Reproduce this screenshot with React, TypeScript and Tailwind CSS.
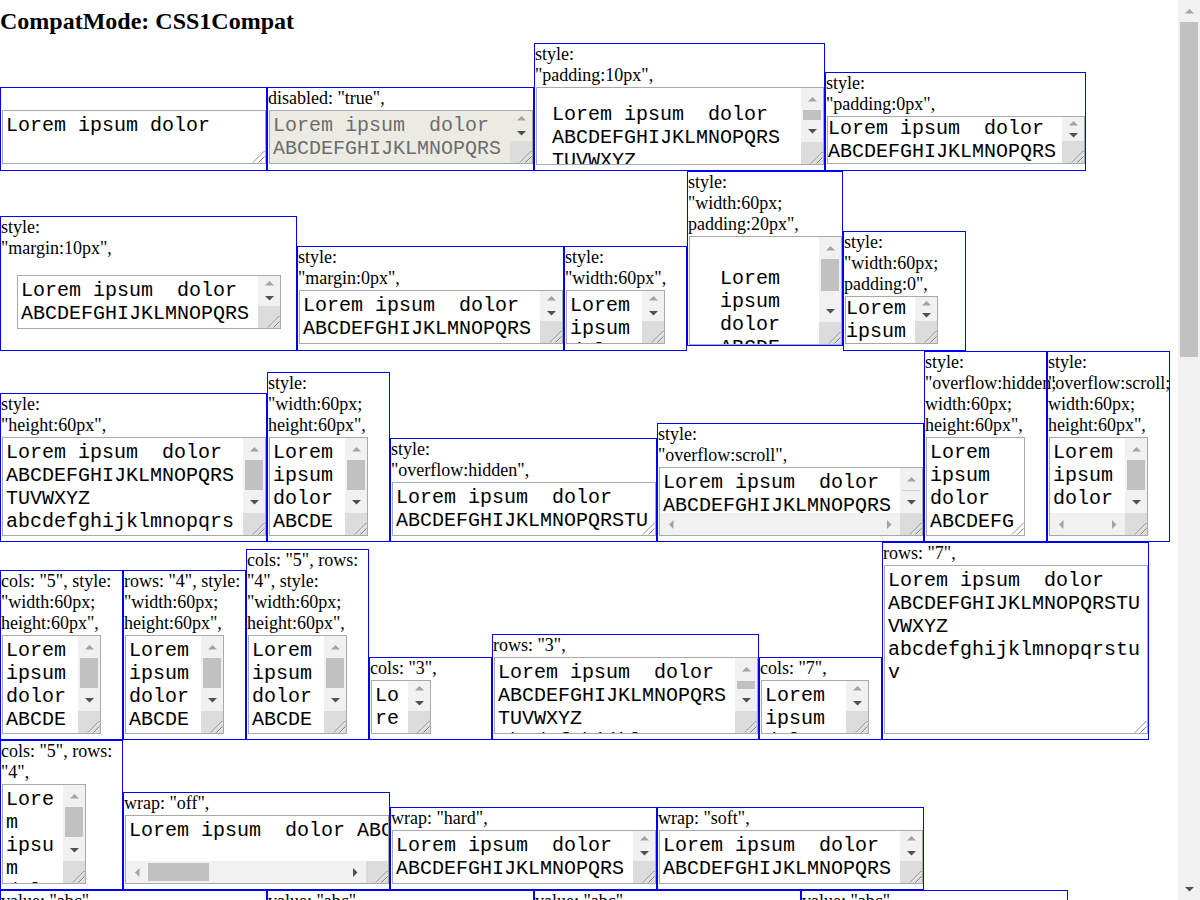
import React from "react";

type VBar = { thumb?: [number, number]; upDark?: boolean; downDark?: boolean; mid?: boolean };
type HBar = { thumb?: [number, number]; leftDark?: boolean; rightDark?: boolean };
type TA = {
  w: number;
  h: number;
  pad?: number;
  lines: string[];
  v?: VBar;
  hb?: HBar;
  disabled?: boolean;
  m?: number;
};
type Box = { w: number; label: string[]; ta: TA; flush?: boolean; tall?: boolean };

const L1 = "Lorem ipsum  dolor";
const L2 = "ABCDEFGHIJKLMNOPQRS";
const L3 = "TUVWXYZ";
const L4 = "abcdefghijklmnopqrs";
const NARROW = ["Lorem", "ipsum", "dolor", "ABCDE", "FGHIJ"];
const W60 = ['"width:60px;', 'height:60px",'];

const rows: Box[][] = [
  [
    { w: 267, tall: true, label: [""], ta: { w: 264, h: 54, lines: ["Lorem ipsum dolor"] } },
    { w: 267, tall: true, label: ['disabled: "true",'], ta: { w: 264, h: 54, disabled: true, lines: [L1, L2, L3], v: { downDark: true } } },
    { w: 291, label: ["style:", '"padding:10px",'], ta: { w: 288, h: 78, pad: 15, lines: [L1, L2, L3, L4], v: { thumb: [0, 10], downDark: true } } },
    { w: 261, tall: true, label: ["style:", '"padding:0px",'], ta: { w: 258, h: 48, pad: 0, lines: [L1, L2, L3], v: { downDark: true } } },
  ],
  [
    { w: 297, tall: true, label: ["style:", '"margin:10px",'], ta: { w: 264, h: 54, m: 15, lines: [L1, L2, L3], v: { downDark: true } } },
    { w: 267, tall: true, label: ["style:", '"margin:0px",'], ta: { w: 264, h: 54, lines: [L1, L2, L3], v: { downDark: true } } },
    { w: 123, tall: true, label: ["style:", '"width:60px",'], ta: { w: 99, h: 54, lines: NARROW, v: { downDark: true } } },
    { w: 156, flush: true, label: ["style:", '"width:60px;', 'padding:20px",'], ta: { w: 153, h: 109, pad: 30, lines: NARROW, v: { thumb: [0, 32], downDark: true } } },
    { w: 123, tall: true, label: ["style:", '"width:60px;', 'padding:0",'], ta: { w: 93, h: 48, pad: 0, lines: NARROW, v: { downDark: true } } },
  ],
  [
    { w: 267, label: ["style:", '"height:60px",'], ta: { w: 264, h: 99, lines: [L1, L2, L3, L4, "tuv"], v: { thumb: [0, 30], downDark: true } } },
    { w: 123, label: ["style:", ...W60], ta: { w: 99, h: 99, lines: NARROW, v: { thumb: [0, 30], downDark: true } } },
    { w: 267, label: ["style:", '"overflow:hidden",'], ta: { w: 264, h: 54, lines: [L1, "ABCDEFGHIJKLMNOPQRSTU", "VWXYZ"] } },
    { w: 267, label: ["style:", '"overflow:scroll",'], ta: { w: 264, h: 69, lines: [L1, L2, L3], v: { downDark: true, mid: true }, hb: {} } },
    { w: 123, label: ["style:", '"overflow:hidden;', "width:60px;", 'height:60px",'], ta: { w: 99, h: 99, lines: ["Lorem", "ipsum", "dolor", "ABCDEFG", "HIJKLMN"] } },
    { w: 123, label: ["style:", '"overflow:scroll;', "width:60px;", 'height:60px",'], ta: { w: 99, h: 99, lines: NARROW, v: { thumb: [0, 30], downDark: true }, hb: {} } },
  ],
  [
    { w: 123, label: ['cols: "5", style:', ...W60], ta: { w: 99, h: 99, lines: NARROW, v: { thumb: [0, 30], downDark: true } } },
    { w: 123, label: ['rows: "4", style:', ...W60], ta: { w: 99, h: 99, lines: NARROW, v: { thumb: [0, 30], downDark: true } } },
    { w: 123, label: ['cols: "5", rows:', '"4", style:', ...W60], ta: { w: 99, h: 99, lines: NARROW, v: { thumb: [0, 30], downDark: true } } },
    { w: 123, label: ['cols: "3",'], ta: { w: 60, h: 54, lines: ["Lo", "re", "m"], v: { downDark: true } } },
    { w: 267, label: ['rows: "3",'], ta: { w: 264, h: 77, lines: [L1, L2, L3, L4], v: { thumb: [1, 8], downDark: true } } },
    { w: 123, label: ['cols: "7",'], ta: { w: 108, h: 54, lines: ["Lorem", "ipsum", "dolor"], v: { downDark: true } } },
    { w: 267, label: ['rows: "7",'], ta: { w: 264, h: 169, lines: [L1, "ABCDEFGHIJKLMNOPQRSTU", "VWXYZ", "abcdefghijklmnopqrstu", "v"] } },
  ],
  [
    { w: 123, label: ['cols: "5", rows:', '"4",'], ta: { w: 84, h: 100, lines: ["Lore", "m", "ipsu", "m", "dolo"], v: { thumb: [0, 30], downDark: true } } },
    { w: 267, label: ['wrap: "off",'], ta: { w: 264, h: 69, lines: ["Lorem ipsum  dolor ABCDEFGHIJKLMNOPQRSTUVWXYZ abcdefghijklmnopqrstuv"], hb: { thumb: [0, 61], rightDark: true } } },
    { w: 267, label: ['wrap: "hard",'], ta: { w: 264, h: 54, lines: [L1, L2, L3], v: { downDark: true } } },
    { w: 267, label: ['wrap: "soft",'], ta: { w: 264, h: 54, lines: [L1, L2, L3], v: { downDark: true } } },
  ],
  [
    { w: 267, label: ['value: "abc",'], ta: { w: 264, h: 54, lines: ["abc"] } },
    { w: 267, label: ['value: "abc",'], ta: { w: 264, h: 54, lines: ["abc"] } },
    { w: 267, label: ['value: "abc",'], ta: { w: 264, h: 54, lines: ["abc"] } },
    { w: 267, label: ['value: "abc",'], ta: { w: 264, h: 54, lines: ["abc"] } },
  ],
];

function Arrow({ dir, dark }: { dir: "up" | "down" | "left" | "right"; dark?: boolean }) {
  const fill = dark ? "#505050" : "#a3a3a3";
  const vert = dir === "up" || dir === "down";
  const pts = { up: "0,4.5 4.5,0 9,4.5", down: "0,0 9,0 4.5,4.5", left: "4.5,0 4.5,9 0,4.5", right: "0,0 0,9 4.5,4.5" }[dir];
  return (
    <svg width={vert ? 9 : 5} height={vert ? 5 : 9} viewBox={vert ? "0 0 9 5" : "0 0 5 9"}>
      <polygon points={pts} fill={fill} />
    </svg>
  );
}

function Grip() {
  return (
    <svg width="22" height="22" viewBox="0 0 22 22" className="block">
      <path d="M10 21.5 L21.5 10 M15.5 21.5 L21.5 15.5" stroke="#7a7a7a" strokeWidth="1" />
      <path d="M11 21.5 L21.5 11 M16.5 21.5 L21.5 16.5" stroke="#ffffff" strokeWidth="1" opacity="0.7" />
    </svg>
  );
}

function VScroll({ v, S, corner, disabled }: { v: VBar; S: number; corner: boolean; disabled?: boolean }) {
  const btn = Math.min(22, Math.floor(S / 2));
  const track = S - 2 * btn;
  return (
    <div className="flex w-[22px] shrink-0 flex-col">
      <div className={"flex flex-col " + (disabled ? "bg-[#ebebe4]" : "bg-[#f1f1f1]")} style={{ height: S }}>
        <div className="flex items-center justify-center" style={{ height: btn }}>
          <Arrow dir="up" dark={v.upDark} />
        </div>
        <div className="flex flex-col px-[2px]" style={{ height: track }}>
          {v.thumb && <div className="bg-[#c1c1c1]" style={{ marginTop: v.thumb[0], height: v.thumb[1] }} />}
          {v.mid && <div className="h-[1px] bg-[#d0d0d0]" />}
        </div>
        <div className="flex items-center justify-center" style={{ height: btn }}>
          <Arrow dir="down" dark={v.downDark} />
        </div>
      </div>
      {corner && (
        <div className="h-[22px] w-[22px] bg-[#dcdcdc]">
          <Grip />
        </div>
      )}
    </div>
  );
}

function HScroll({ hb, W }: { hb: HBar; W: number }) {
  const btn = Math.min(22, Math.floor(W / 2));
  const track = W - 2 * btn;
  return (
    <div className="flex h-[22px] shrink-0">
      <div className="flex bg-[#f1f1f1]" style={{ width: W }}>
        <div className="flex items-center justify-center" style={{ width: btn }}>
          <Arrow dir="left" dark={hb.leftDark} />
        </div>
        <div className="flex py-[2px]" style={{ width: track }}>
          {hb.thumb && <div className="bg-[#c1c1c1]" style={{ marginLeft: hb.thumb[0], width: hb.thumb[1] }} />}
        </div>
        <div className="flex items-center justify-center" style={{ width: btn }}>
          <Arrow dir="right" dark={hb.rightDark} />
        </div>
      </div>
      <div className="h-[22px] w-[22px] bg-[#dcdcdc]">
        <Grip />
      </div>
    </div>
  );
}

function TextArea({ ta }: { ta: TA }) {
  const S = ta.h - 2 - 22;
  const m = ta.m ?? 0;
  return (
    <div
      className={
        "flex shrink-0 flex-col overflow-hidden border border-[#a9a9a9] " +
        (ta.disabled ? "bg-[#ebebe4] text-[#6d6d6d]" : "bg-white text-black")
      }
      style={{ width: ta.w, height: ta.h, margin: `${m + 1}px ${m}px ${m}px ${m + 1}px` }}
    >
      <div className="flex min-h-0 flex-1">
        <div
          className="relative min-w-0 flex-1 overflow-hidden font-['Liberation_Mono',monospace] text-[20px] leading-[23px]"
          style={{ padding: ta.pad ?? 3 }}
        >
          {ta.lines.map((l, i) => (
            <div key={i} className="whitespace-pre">
              {l}
            </div>
          ))}
          {!ta.v && !ta.hb && (
            <div className="absolute bottom-0 right-0">
              <Grip />
            </div>
          )}
        </div>
        {ta.v && <VScroll v={ta.v} S={S} corner={!ta.hb} disabled={ta.disabled} />}
      </div>
      {ta.hb && <HScroll hb={ta.hb} W={ta.w - 2 - 22} />}
    </div>
  );
}

function BoxView({ b }: { b: Box }) {
  const bottom = b.flush ? "mb-[5px]" : b.tall ? "pb-[6px]" : "pb-[5px]";
  return (
    <div className={"flex shrink-0 flex-col items-start border border-[#0000ff] " + bottom} style={{ width: b.w }}>
      {b.label.map((l, i) => (
        <div key={i} className="whitespace-nowrap font-['Liberation_Serif',serif] text-[18px] leading-[21px] text-black">
          {l || "\u00a0"}
        </div>
      ))}
      <TextArea ta={b.ta} />
    </div>
  );
}

export default function App() {
  return (
    <div className="flex h-[900px] w-[1200px] overflow-hidden bg-white">
      <div className="w-[1178px] shrink-0 overflow-hidden">
        <div className="h-[43px] pt-[7px] font-['Liberation_Serif',serif] text-[24px] font-bold leading-[28px] text-black">
          CompatMode: CSS1Compat
        </div>
        {rows.map((row, ri) => (
          <div key={ri} className={"flex " + (ri === rows.length - 1 ? "items-start" : "items-end")}>
            {row.map((b, bi) => (
              <BoxView key={bi} b={b} />
            ))}
          </div>
        ))}
      </div>
      <div className="flex w-[22px] shrink-0 flex-col bg-[#f1f1f1]">
        <div className="flex h-[22px] items-center justify-center">
          <Arrow dir="up" />
        </div>
        <div className="flex flex-1 flex-col px-[2px]">
          <div className="h-[335px] bg-[#c1c1c1]" />
        </div>
        <div className="flex h-[22px] items-center justify-center">
          <Arrow dir="down" dark />
        </div>
      </div>
    </div>
  );
}
